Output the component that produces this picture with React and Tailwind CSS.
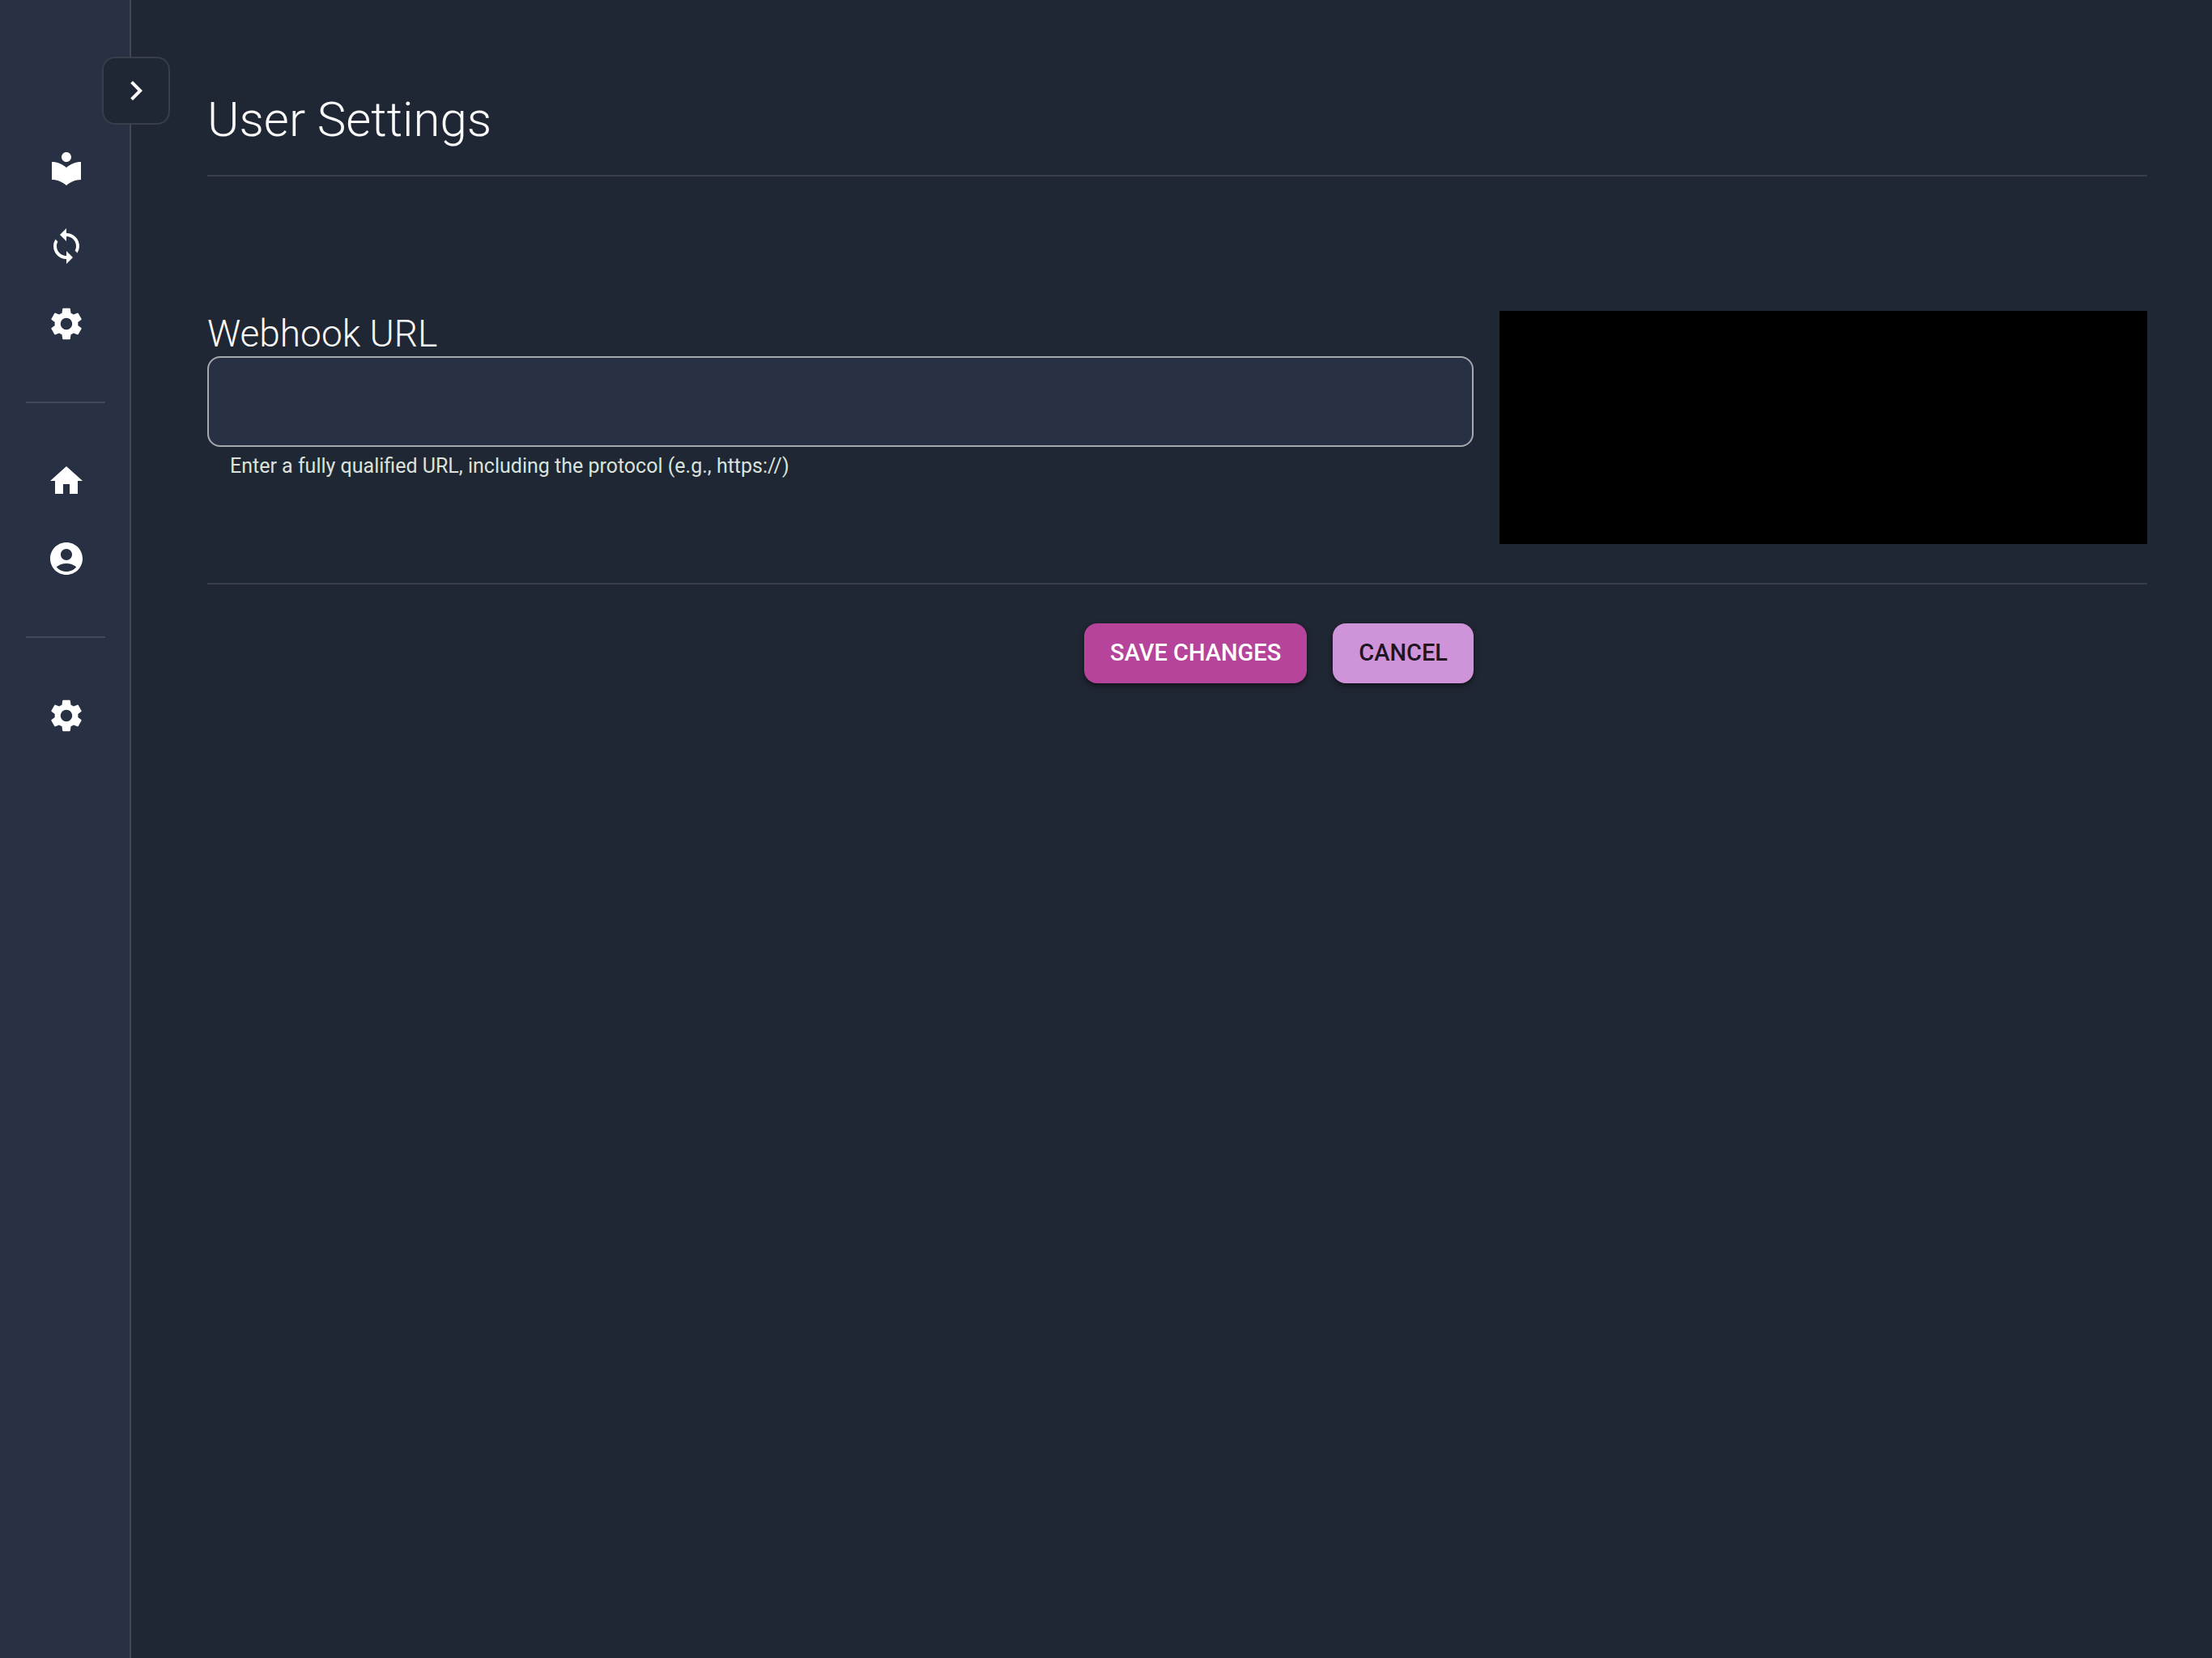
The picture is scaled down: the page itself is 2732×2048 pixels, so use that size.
import {
  MdAccountCircle,
  MdChevronRight,
  MdHome,
  MdLocalLibrary,
  MdSettings,
  MdSync,
} from "react-icons/md";

const navGroups = [
  [
    { label: "Library", Icon: MdLocalLibrary },
    { label: "Sync", Icon: MdSync },
    { label: "Preferences", Icon: MdSettings },
  ],
  [
    { label: "Home", Icon: MdHome },
    { label: "Account", Icon: MdAccountCircle },
  ],
  [{ label: "Settings", Icon: MdSettings }],
];

function Sidebar() {
  return (
    <aside className="relative w-[162px] shrink-0 bg-[#283043] px-8 pt-40 shadow-[inset_-2px_0_0_#424757]">
      <button
        type="button"
        aria-label="Expand sidebar"
        className="absolute top-[70px] -right-12 flex size-[84px] items-center justify-center rounded-2xl border-2 border-[#383e4b] bg-[#202734]"
      >
        <MdChevronRight className="size-12" />
      </button>
      <nav aria-label="Main">
        {navGroups.map((group, index) => (
          <div key={index}>
            {index > 0 && <hr className="my-12 border-t-2 border-[#414858]" />}
            <ul>
              {group.map(({ label, Icon }) => (
                <li key={label}>
                  <a
                    href="#"
                    aria-label={label}
                    className="flex h-24 items-center justify-center pl-0.5"
                  >
                    <Icon className="size-12" />
                  </a>
                </li>
              ))}
            </ul>
          </div>
        ))}
      </nav>
    </aside>
  );
}

const columns = "grid grid-cols-[minmax(0,1fr)_800px] gap-8";
const buttonBase =
  "h-[74px] rounded-2xl px-8 text-[29px] font-medium uppercase shadow-[0_2px_4px_rgba(0,0,0,0.4),0_4px_8px_rgba(0,0,0,0.2)]";

export default function App() {
  return (
    <div className="flex min-h-screen bg-[#202734] font-[Roboto,sans-serif] text-white">
      <Sidebar />
      <main className="min-w-0 flex-1 pt-24 pr-20 pl-[94px]">
        <header className="border-b-2 border-[#393e4b] pt-3.5 pb-7.5">
          <h1 className="text-[60px] leading-[76px] font-light text-[#fafafa]">
            User Settings
          </h1>
        </header>
        <form onSubmit={(event) => event.preventDefault()}>
          <div
            className={`${columns} mt-[166px] border-b-2 border-[#393e4b] pb-12`}
          >
            <div>
              <label
                htmlFor="webhook-url"
                className="block text-[46px] leading-[56px] font-light text-[#fafafa]"
              >
                Webhook URL
              </label>
              <input
                id="webhook-url"
                type="url"
                aria-describedby="webhook-help"
                className="block h-28 w-full rounded-2xl border-2 border-[#a6a9af] bg-[#283043] px-7 text-[32px] outline-none"
              />
              <p
                id="webhook-help"
                className="mt-2 px-7 text-[25px] leading-8 text-[#dae2db]"
              >
                Enter a fully qualified URL, including the protocol (e.g.,
                https://)
              </p>
            </div>
            <div className="h-72 bg-black" />
          </div>
          <div className={`${columns} pt-12`}>
            <div className="flex justify-end gap-8">
              <button type="submit" className={`${buttonBase} bg-[#b5449a]`}>
                Save Changes
              </button>
              <button
                type="button"
                className={`${buttonBase} bg-[#ce93d8] text-black/87`}
              >
                Cancel
              </button>
            </div>
          </div>
        </form>
      </main>
    </div>
  );
}
